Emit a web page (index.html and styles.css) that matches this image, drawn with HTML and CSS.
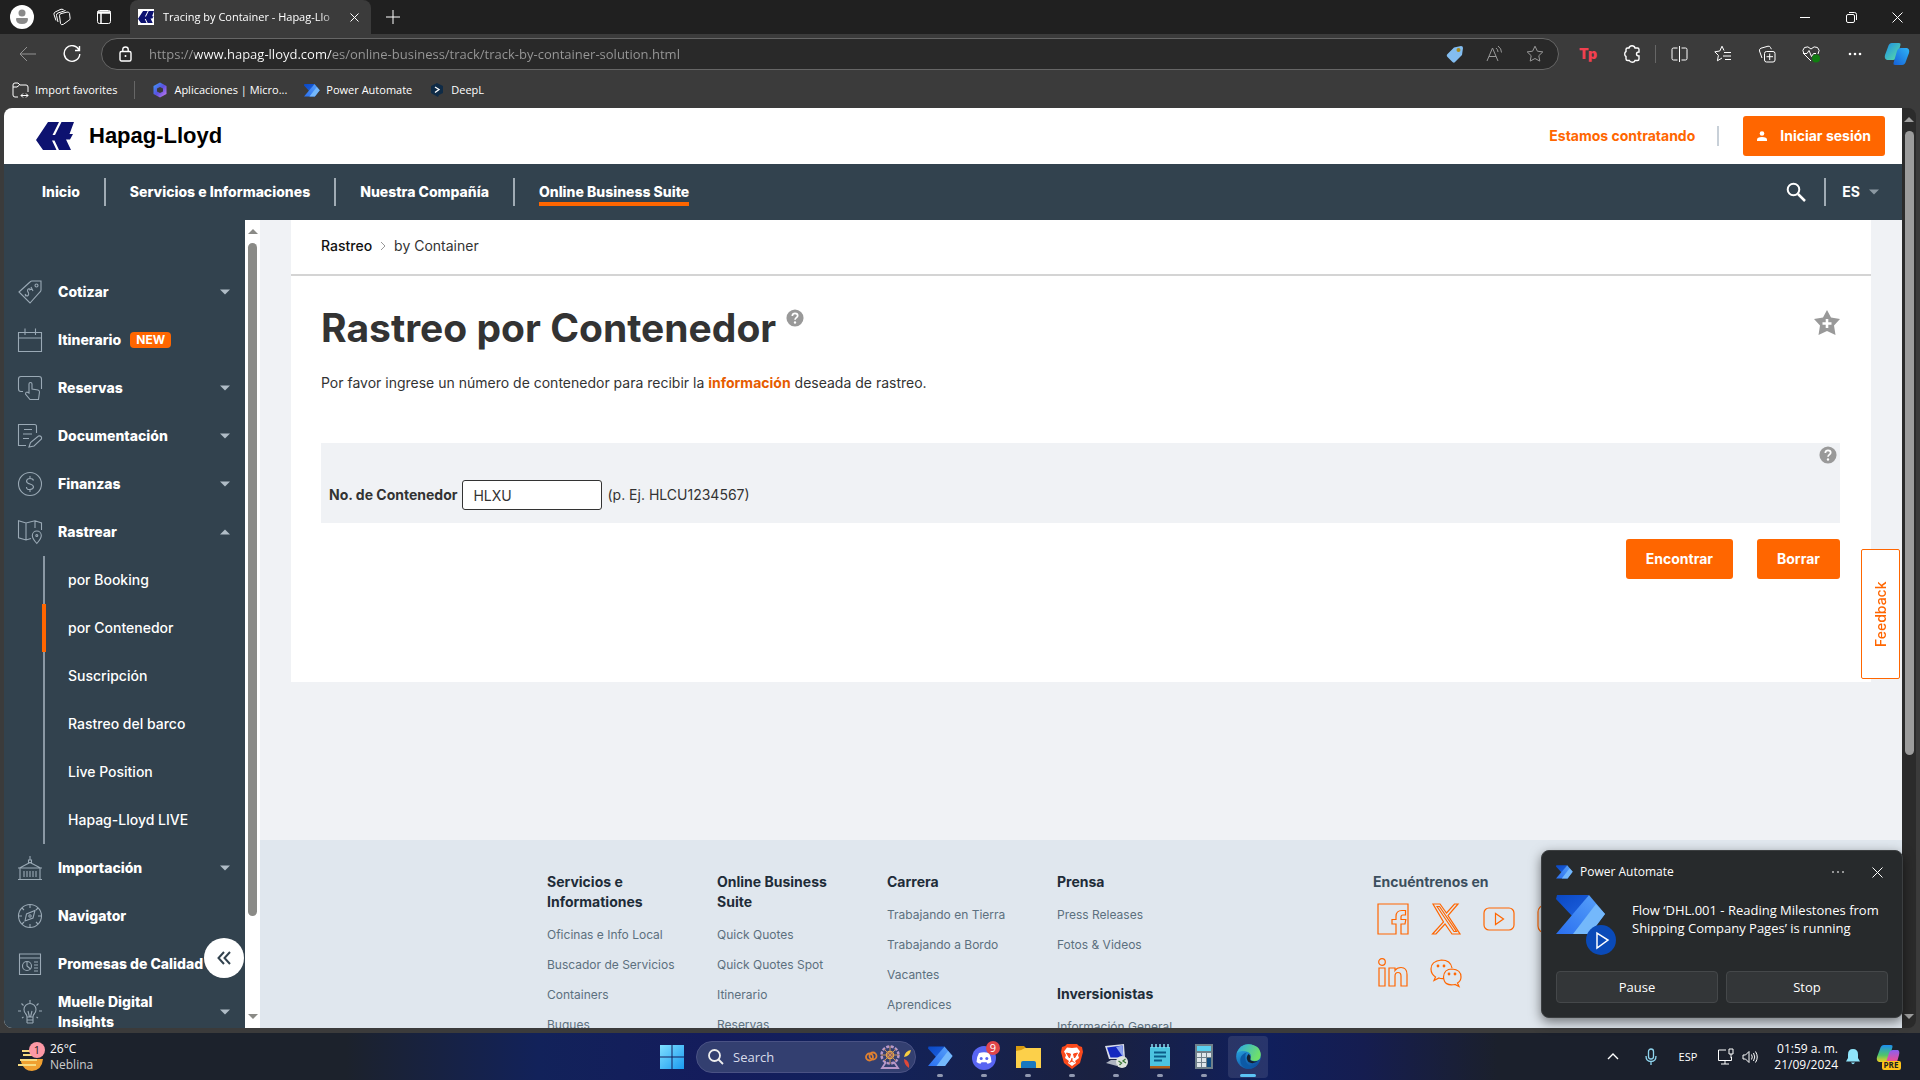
FILE: index.html
```
<!DOCTYPE html>
<html lang="es">
<head>
<meta charset="utf-8">
<title>Tracing by Container - Hapag-Lloyd</title>
<link rel="stylesheet" href="styles.css">
</head>
<body>
<svg class="defs" aria-hidden="true">
  <defs>
    <linearGradient id="pa1" x1="0" y1="0" x2="1" y2="1"><stop offset="0" stop-color="#0a48c4"/><stop offset="1" stop-color="#1e62e0"/></linearGradient>
    <linearGradient id="pa2" x1="0" y1="1" x2="1" y2="0"><stop offset="0" stop-color="#2a6ff0"/><stop offset="1" stop-color="#5aa4fa"/></linearGradient>
    <linearGradient id="cp1" x1="0" y1="0" x2="1" y2="1"><stop offset="0" stop-color="#1b8fe8"/><stop offset="1" stop-color="#5fe0a0"/></linearGradient>
    <linearGradient id="cp2" x1="1" y1="0" x2="0" y2="1"><stop offset="0" stop-color="#2fb4f5"/><stop offset="1" stop-color="#1560d8"/></linearGradient>
    <linearGradient id="cp3" x1="0" y1="0" x2="0" y2="1"><stop offset="0" stop-color="#1c8df0"/><stop offset="0.6" stop-color="#4fc56a"/><stop offset="1" stop-color="#f0d020"/></linearGradient>
    <linearGradient id="cp4" x1="0" y1="0" x2="0" y2="1"><stop offset="0" stop-color="#8a60f0"/><stop offset="0.6" stop-color="#e050a0"/><stop offset="1" stop-color="#f08040"/></linearGradient>
    <linearGradient id="win" x1="0" y1="0" x2="1" y2="1"><stop offset="0" stop-color="#7fe0ff"/><stop offset="1" stop-color="#1a9af0"/></linearGradient>
    <linearGradient id="ed1" x1="0" y1="0" x2="1" y2="0.4"><stop offset="0" stop-color="#2aa8e8"/><stop offset="1" stop-color="#6fe06a"/></linearGradient>
    <linearGradient id="ed2" x1="0" y1="0" x2="0.6" y2="1"><stop offset="0" stop-color="#2bb4ee"/><stop offset="1" stop-color="#0f4fa0"/></linearGradient>
    <linearGradient id="m3" x1="0" y1="0" x2="1" y2="1"><stop offset="0" stop-color="#3aa0f8"/><stop offset="0.5" stop-color="#5a50e0"/><stop offset="1" stop-color="#d080f0"/></linearGradient>
    <symbol id="flow" viewBox="0 0 50 40"><path d="M1 0h32L17 22 0 4z" fill="url(#pa1)"/><path d="M33 0l16 19-15 20H0z" fill="url(#pa2)"/><path d="M49 19 34 39H17L40 9z" fill="#74b8fb"/></symbol>
    <symbol id="hl" viewBox="0 0 38 28"><path d="M12 0h11l-6.500 13h2.500L25.500 0H38l-4.500 12h3.500l-3 5.500h-4L35 28H23l-4.500-9.500H16L20.500 28H7L0 18z" fill="#0d1270"/></symbol>
    <symbol id="help" viewBox="0 0 20 20"><circle cx="10" cy="10" r="9.500" fill="#999"/><path d="M7 7.800C7 5.800 8.300 4.800 10 4.800s3 1 3 2.700c0 2-3 2.300-3 4.500" fill="none" stroke="#fff" stroke-width="1.900"/><circle cx="10" cy="15" r="1.300" fill="#fff"/></symbol>
    <symbol id="caret" viewBox="0 0 10 6"><path d="M0 .5h10L5 5.500z" fill="currentColor"/></symbol>
  </defs>
</svg>

<header class="tabs">
  <button class="ib avatar" aria-label="Perfil"><svg width="24" height="24" viewBox="0 0 24 24"><circle cx="12" cy="12" r="12" fill="#fff"/><circle cx="12" cy="8" r="3.500" fill="#8a8a8a"/><path d="M6 14q0-1 1-1h10q1 0 1 1 0 5-6 5t-6-5z" fill="#8a8a8a"/></svg></button>
  <button class="ib" aria-label="Espacios de trabajo"><svg width="18" height="18" viewBox="0 0 18 18" class="ln"><path d="M6.500 7.500Q6.500 6 8 5.600l6-1.500q2-.4 2.500 1.200l.6 5q.2 1.500-1.200 2l-5.500 4Q8 17.500 7.500 15.500zM5 14 3.500 7.500Q3.300 5.500 5 5l7.500-2.500M3 12.500 1 6.500Q.6 4.800 2.200 4L8 1.200l2.500.3"/></svg></button>
  <button class="ib" aria-label="Acciones de pestañas"><svg width="16" height="16" viewBox="0 0 16 16" class="ln"><rect x="1.500" y="1.500" width="13" height="13" rx="2"/><path d="M1.500 3.500h13" stroke-width="2.500"/><path d="M5 4v10" stroke-width="1.500"/></svg></button>
  <div class="tab">
    <span class="fav"><svg width="16" height="12"><use href="#hl"/></svg></span>
    <span class="tabname">Tracing by Container - Hapag-Llo</span>
    <button class="ib" aria-label="Cerrar pestaña"><svg width="9" height="9" viewBox="0 0 9 9" class="ln"><path d="M.5.5l8 8m0-8-8 8"/></svg></button>
  </div>
  <button class="ib plus" aria-label="Nueva pestaña"><svg width="14" height="14" viewBox="0 0 14 14" class="ln"><path d="M7 0v14M0 7h14"/></svg></button>
  <div class="winbtns">
    <button class="ib" aria-label="Minimizar"><svg width="10" height="10" viewBox="0 0 10 10" class="ln"><path d="M0 5.500h10"/></svg></button>
    <button class="ib" aria-label="Restaurar"><svg width="11" height="11" viewBox="0 0 11 11" class="ln"><rect x=".5" y="2.500" width="8" height="8" rx="1.500"/><path d="M3 .5h5.500q2 0 2 2V8"/></svg></button>
    <button class="ib" aria-label="Cerrar"><svg width="11" height="11" viewBox="0 0 11 11" class="ln"><path d="M.5.500l10 10m0-10-10 10"/></svg></button>
  </div>
</header>

<div class="toolbar">
  <button class="ib dim" aria-label="Atrás"><svg width="18" height="16" viewBox="0 0 18 16" class="ln"><path d="M17 8H1m7-7L1 8l7 7"/></svg></button>
  <button class="ib" aria-label="Actualizar"><svg width="18" height="18" viewBox="0 0 18 18" class="ln thick"><path d="M16 5A7.800 7.800 0 1 0 16.800 9M16.500 1v4.500H12"/></svg></button>
  <div class="url">
    <svg width="13" height="16" viewBox="0 0 13 16" class="ln thick"><rect x="1" y="5.500" width="11" height="9.500" rx="1.500"/><path d="M3.800 5V3.500q0-2.500 2.700-2.500t2.700 2.500V5"/><circle cx="6.500" cy="10" r="1" fill="#fff" stroke="none"/></svg>
    <input class="address" aria-label="Dirección" value="https://www.hapag-lloyd.com/es/online-business/track/track-by-container-solution.html">
    <svg width="18" height="18" viewBox="0 0 18 18"><path d="M8 2.500 15 1q2 0 2 2l-1 7-7 7q-1 1.500-2.500 0L1.500 12q-1.500-1.500 0-3z" fill="#83bdf0"/><circle cx="12.500" cy="5" r="2" fill="#a88a1c"/></svg>
    <svg width="18" height="18" viewBox="0 0 18 18" class="ln grey"><path d="M1 16 6.500 3 12 16M3 11.500h7M10 3q2 1.500 2 4M12 1q3.500 2.500 3.500 6.500"/></svg>
    <svg width="18" height="18" viewBox="0 0 18 18" class="ln grey"><path d="M9 1.200l2.400 5 5.400.7-4 3.800 1 5.400L9 13.500l-4.800 2.600 1-5.400-4-3.800 5.400-.7z"/></svg>
  </div>
  <div class="tools">
    <button class="ib tp">Tp</button>
    <button class="ib" aria-label="Extensiones"><svg width="17" height="18" viewBox="0 0 17 18" class="ln thick"><path d="M5 3Q5.500.8 8 .8T11 3h2.500q1.500 0 1.500 1.500V7q-2.500 0-2.500 2t2.500 2v3q0 1.500-1.500 1.500H11q-.5 1.700-2.700 1.700T5.300 15.500H3.800Q2 15.500 2 14v-2.500Q.7 11 .7 9T2 6.500v-2Q2 3 3.500 3z"/></svg></button>
    <i class="vr"></i>
    <button class="ib" aria-label="Pantalla dividida"><svg width="17" height="18" viewBox="0 0 17 18" class="ln"><path d="M6.500 3h-4Q1 3 1 4.500v9Q1 15 2.500 15h4M10.500 3h4Q16 3 16 4.500v9q0 1.500-1.500 1.500h-4M8.500 1v16"/></svg></button>
    <button class="ib" aria-label="Favoritos"><svg width="18" height="18" viewBox="0 0 18 18" class="ln"><path d="M10 5.500 8 1.200 5.800 6 .8 6.800l3.600 3.600-1 5.400L8 13M10 7.500h7M9 11h8M11 14.500h6"/></svg></button>
    <button class="ib" aria-label="Colecciones"><svg width="18" height="18" viewBox="0 0 18 18" class="ln"><rect x="6.500" y="6.500" width="10.500" height="10.500" rx="2"/><path d="M11.700 8.500v6.500M8.500 11.700H15M4 13 1.500 6Q1 4 3 3.200l7-2q2-.4 2.600 1.500l.8 1.500"/></svg></button>
    <button class="ib" aria-label="Rendimiento"><svg width="18" height="18" viewBox="0 0 18 18" class="ln"><path d="M9 16 2 9Q-.5 5 2.500 2.500 6 .5 9 4q3-3.500 6.500-1.500Q18.500 5 16 9M1 8.500h4l2-3 2.500 6 2-3H14"/><circle cx="14" cy="13.500" r="4" fill="#107c10" stroke="none"/></svg></button>
    <button class="ib" aria-label="Más"><svg width="14" height="4" viewBox="0 0 14 4" fill="#fff"><circle cx="2" cy="2" r="1.300"/><circle cx="7" cy="2" r="1.300"/><circle cx="12" cy="2" r="1.300"/></svg></button>
    <button class="ib" aria-label="Copilot"><svg width="26" height="24" viewBox="0 0 26 24"><path d="M8 1h7q2 0 1.500 2L13 15q-1 3-4 3H3q-3-1-2-5L4 5q1-4 4-4z" fill="url(#cp1)"/><path d="M18 23h-7q-2 0-1.500-2L13 9q1-3 4-3h6q3 1 2 5l-3 8q-1 4-4 4z" fill="url(#cp2)"/></svg></button>
  </div>
</div>

<nav class="bookmarks" aria-label="Favoritos">
  <a href="#"><svg width="17" height="17" viewBox="0 0 17 17" class="ln"><path d="M6 15H3q-2 0-2-2V3q0-2 2-2h3l2 2h6q2 0 2 2v5M1 5h4l2.500-2M9 13.500h7m-2-2 2 2-2 2m-3-4-2 2 2 2"/></svg>Import favorites</a>
  <i class="vr"></i>
  <a href="#"><svg width="16" height="16" viewBox="0 0 16 16"><path d="M8 .5 14.500 4v8L8 15.500 1.500 12V4z" fill="url(#m3)"/><path d="M8 5l3 1.500v3L8 11 5 9.500v-3z" fill="#3b3b3b"/></svg>Aplicaciones | Micro...</a>
  <a href="#"><svg width="16" height="13"><use href="#flow"/></svg>Power Automate</a>
  <a href="#"><svg width="16" height="16" viewBox="0 0 16 16"><path d="M8 1l6 3v7l-4 2-1 2-7-4V4z" fill="#0f2b46"/><path d="M6 5l4 2.500L6 10.500" fill="none" stroke="#fff" stroke-width="1.300"/></svg>DeepL</a>
</nav>

<main class="view">
  <div class="site">
    <div class="brandbar">
      <a class="logo" href="#"><svg width="38" height="28"><use href="#hl"/></svg>Hapag-Lloyd</a>
      <a class="hire" href="#">Estamos contratando</a>
      <button class="btn login"><svg width="10" height="10" viewBox="0 0 10 10" fill="#fff"><circle cx="5" cy="2.500" r="2.300"/><path d="M0 10V8.500Q0 6 5 6t5 2.500V10z"/></svg>Iniciar sesión</button>
    </div>
    <nav class="mainnav">
      <a href="#">Inicio</a><a href="#">Servicios e Informaciones</a><a href="#">Nuestra Compañía</a><a href="#" class="on"><span>Online Business Suite</span></a>
      <button class="ib search" aria-label="Buscar"><svg width="20" height="20" viewBox="0 0 20 20" fill="none" stroke="#fff" stroke-width="2"><circle cx="7.500" cy="7.500" r="5.800"/><path d="M12 12l7 7" stroke-width="2.500"/></svg></button>
      <button class="ib lang">ES<svg width="10" height="6"><use href="#caret"/></svg></button>
    </nav>
    <div class="body">
      <aside class="side">
        <ul>
          <li><a href="#"><svg class="ic" viewBox="0 0 24 24"><path d="M1 12 12 2q1-1 2-1h9v9q0 1-1 2L12 23zM7 14q1.500 3 3 1.500T9.500 11q0-3 3-2M7 16l1.500-1M11 10l3.500-1M13 7l2 4"/><circle cx="18.500" cy="5.500" r="1.500"/></svg><b>Cotizar</b><svg class="ca"><use href="#caret"/></svg></a></li>
          <li><a href="#"><svg class="ic" viewBox="0 0 24 24"><path d="M.5 4.500h23v19H.5zM.5 10h23M7 .5V7M17.500.5V7"/></svg><b>Itinerario</b><em>NEW</em></a></li>
          <li><a href="#"><svg class="ic" viewBox="0 0 24 24"><path d="M5 15.500H3q-2.500 0-2.500-2.500V3Q.5.500 3 .500h18q2.500 0 2.500 2.500v10M11 16V8q0-1.500 1.500-1.500T14 8v5l6 1q1.500.5 1.500 2L20.500 23.500H12L7.500 18q0-2 1.500-2l2 1z"/></svg><b>Reservas</b><svg class="ca"><use href="#caret"/></svg></a></li>
          <li><a href="#"><svg class="ic" viewBox="0 0 24 24"><path d="M8 21.500H.5V.5h16q2 0 2 2V9M6 5.500h8M5 10h9M5 14.500h6M11 23l1.500-4.500 8-6.500q1.500-.5 2.500.5t.5 2.500L16 22z"/></svg><b>Documentación</b><svg class="ca"><use href="#caret"/></svg></a></li>
          <li><a href="#"><svg class="ic" viewBox="0 0 24 24"><circle cx="12" cy="12" r="11.500"/><path d="M15.500 8.500Q15 6.500 12 6.500T8.500 9q0 2 3.500 3t3.500 3-3.500 2.500T8.500 15M12 4v2.500m0 11V20"/></svg><b>Finanzas</b><svg class="ca"><use href="#caret"/></svg></a></li>
          <li><a href="#"><svg class="ic" viewBox="0 0 24 24"><path d="M23.500 10V3L17 .8 8 3 .5.800v17L8 20l5-1.500M8 3v17M17 .8V8M18.800 23.500q-4.500-5-4.500-8a4.500 4.500 0 0 1 9 0q0 3-4.500 8z"/><circle cx="18.800" cy="15.500" r="1"/></svg><b>Rastrear</b><svg class="ca up"><use href="#caret"/></svg></a>
            <ul class="sub">
              <li><a href="#">por Booking</a></li><li class="cur"><a href="#">por Contenedor</a></li><li><a href="#">Suscripción</a></li><li><a href="#">Rastreo del barco</a></li><li><a href="#">Live Position</a></li><li><a href="#">Hapag-Lloyd LIVE</a></li>
            </ul></li>
          <li><a href="#"><svg class="ic" viewBox="0 0 24 24"><path d="M12 0v4m-1.500 0h3v2.500h-3zM12 6.500 1.500 12m10.500-5.500L22.500 12M0 12h24M2 12v11M22 12v11M0 23.500h24M6 15v6m3-6v6m3-6v6m3-6v6m3-6v6"/></svg><b>Importación</b><svg class="ca"><use href="#caret"/></svg></a></li>
          <li><a href="#"><svg class="ic" viewBox="0 0 24 24"><circle cx="12" cy="12" r="11.500"/><path d="M12 0v4m0 16v4M0 12h4m16 0h4M4 4l2 2M20 4l-2 2M4 20l2-2M20 20l-2-2M7 17l1.500-7L17 6.500 15 14z"/><circle cx="12" cy="12" r="1.200"/></svg><b>Navigator</b></a></li>
          <li><a href="#"><svg class="ic" viewBox="0 0 24 24"><path d="M1.500 2h21v20.500h-21zM1.500 6h21M16 10h4m-4 3h4m-4 3h4M16 19h4M9 9.500V14l3.500 3"/><circle cx="9" cy="14" r="4.500"/></svg><b>Promesas de Calidad</b></a></li>
          <li><a href="#"><svg class="ic" viewBox="0 0 24 24"><path d="M9 17q0-2-1.500-3.500a6 6 0 1 1 9 0Q15 15 15 17zM9 20h6m-6 3h6M9 17v6m6-6v6M10 11l1.500 6m2.500-6-1.500 6M12 0v3M3.500 3.500l2 2m15-2-2 2M0 11h3m18 0h3M4 18l1.500-1M20 18l-1.500-1"/></svg><b>Muelle Digital Insights</b><svg class="ca"><use href="#caret"/></svg></a></li>
        </ul>
        <button class="collapse" aria-label="Contraer menú"><svg width="14" height="14" viewBox="0 0 14 14" fill="none" stroke="#32424e" stroke-width="2"><path d="M7 1 1.500 7 7 13M13 1 7.500 7l5.500 6"/></svg></button>
      </aside>
      <div class="sb light"><svg class="up"><use href="#caret"/></svg><i></i><s></s><svg><use href="#caret"/></svg></div>
      <div class="content">
        <section class="card">
          <div class="crumbs"><a href="#">Rastreo</a><svg width="6" height="10" viewBox="0 0 6 10" fill="none" stroke="#999"><path d="M1 1l4 4-4 4"/></svg><span>by Container</span></div>
          <div class="panel">
            <div class="head"><h1>Rastreo por Contenedor</h1><svg class="hp" width="18" height="18"><use href="#help"/></svg><svg class="star" width="26" height="26" viewBox="0 0 26 26"><path d="M13 0l4 7.500 9 1.500-6 6.500 1.500 9.500-8.500-4-8.500 4L6 15.500 0 9l9-1.500z" fill="#999"/><path d="M13 9v9M8.500 13.500h9" stroke="#fff" stroke-width="2.600"/></svg></div>
            <p>Por favor ingrese un número de contenedor para recibir la <a href="#">información</a> deseada de rastreo.</p>
            <form>
              <div class="box"><svg class="hp" width="18" height="18"><use href="#help"/></svg>
                <div class="row"><label for="cn">No. de Contenedor</label><input id="cn" value="HLXU"><span>(p. Ej. HLCU1234567)</span></div></div>
              <div class="acts"><button type="button" class="btn">Encontrar</button><button type="button" class="btn">Borrar</button></div>
            </form>
          </div>
        </section>
        <footer><div class="cols">
          <div><h2>Servicios e Informationes</h2><a href="#">Oficinas e Info Local</a><a href="#">Buscador de Servicios</a><a href="#">Containers</a><a href="#">Buques</a></div>
          <div><h2>Online Business Suite</h2><a href="#">Quick Quotes</a><a href="#">Quick Quotes Spot</a><a href="#">Itinerario</a><a href="#">Reservas</a></div>
          <div><h2>Carrera</h2><a href="#">Trabajando en Tierra</a><a href="#">Trabajando a Bordo</a><a href="#">Vacantes</a><a href="#">Aprendices</a></div>
          <div><h2>Prensa</h2><a href="#">Press Releases</a><a href="#">Fotos &amp; Videos</a><h2 class="more">Inversionistas</h2><a href="#">Información General</a></div>
          <div class="social"><h2>Encuéntrenos en</h2><div class="icons">
            <svg viewBox="0 0 32 32"><path d="M1 1h30v30h-7V21h4l.8-4.500H24V14q0-2 2-2h2.500V7.500H25q-6 0-6 6v3h-4V21h4v10H1z"/></svg>
            <svg viewBox="0 0 32 32"><path d="M3 1h7l6.500 9 8-9h3.500L18 12.500 30 31h-8l-7-10-9 10H2.500L13.500 19zM7 3.500l17 25h2.500L9.500 3.500z"/></svg>
            <svg viewBox="0 0 32 32"><rect x="1" y="5" width="30" height="22" rx="5"/><path d="M12.500 10.500v11l8-5.500z"/></svg>
            <svg viewBox="0 0 32 32"><rect x="2" y="2" width="28" height="28" rx="7"/><circle cx="16" cy="16" r="7"/></svg>
            <svg viewBox="0 0 32 32"><circle cx="5" cy="5" r="3.300"/><path d="M2 11h6v18H2zM12 11h6v2.500q2-3 6-3 6 0 6 7V29h-6V19q0-3.500-3-3.500T18 19v10h-6z"/></svg>
            <svg viewBox="0 0 32 32"><path d="M22 11q-1.500-8-10.500-8Q1 4 1 12q0 5 4.500 8L4 23.500 9 21q2 .8 5 .5"/><path d="M22 12q9 .5 9 8 0 4-3.500 6l1.500 3.500-4-2Q14 29.500 13.500 20 14 12 22 12z"/><g fill="#f60"><circle cx="8" cy="9" r=".8"/><circle cx="14" cy="9" r=".8"/><circle cx="19" cy="17" r=".8"/><circle cx="25" cy="17" r=".8"/></g></svg>
          </div></div>
        </div></footer>
      </div>
    </div>
    <button class="feedback">Feedback</button>
  </div>
  <div class="sb dark"><svg class="up"><use href="#caret"/></svg><i></i><s></s><svg><use href="#caret"/></svg></div>
  <section class="toast">
    <div class="th"><svg width="17" height="14"><use href="#flow"/></svg><span>Power Automate</span><button class="ib" aria-label="Opciones"><svg width="14" height="4" viewBox="0 0 14 4" fill="#bbb"><circle cx="2" cy="2" r="1"/><circle cx="7" cy="2" r="1"/><circle cx="12" cy="2" r="1"/></svg></button><button class="ib" aria-label="Cerrar aviso"><svg width="11" height="11" viewBox="0 0 11 11" class="ln"><path d="M.5.500l10 10m0-10-10 10"/></svg></button></div>
    <div class="tb"><svg width="60" height="60" viewBox="0 0 60 60"><use href="#flow" width="50" height="40"/><circle cx="45" cy="45" r="15" fill="#0a4ab8"/><path d="M41 38v15l11-8z" fill="none" stroke="#fff" stroke-width="1.500"/></svg><p>Flow ‘DHL.001 - Reading Milestones from<br>Shipping Company Pages’ is running</p></div>
    <div class="ta"><button>Pause</button><button>Stop</button></div>
  </section>
</main>

<footer class="taskbar">
  <div class="weather"><svg width="30" height="32" viewBox="0 0 30 32"><path d="M4 18h22q-1 11-11 12-8 0-11-9z" fill="#f0a030"/><path d="M6 14h14M3 19h17M1 24h18M5 10h8" stroke="#f8dc80" stroke-width="2"/><circle cx="20" cy="9" r="8" fill="#fd99a6"/><text x="20" y="13" text-anchor="middle" font-size="11" fill="#222">1</text></svg><div>26°C<br><span>Neblina</span></div></div>
  <div class="apps">
    <button aria-label="Inicio"><svg width="24" height="24" viewBox="0 0 24 24" fill="url(#win)"><path d="M0 0h11.500v11.500H0zM12.500 0H24v11.500H12.500zM0 12.500h11.500V24H0zM12.500 12.500H24V24H12.500z"/></svg></button>
    <label class="tsearch"><svg width="16" height="16" viewBox="0 0 16 16" fill="none" stroke="#eee" stroke-width="1.800"><circle cx="6.500" cy="6.500" r="5.500"/><path d="M10.500 10.500 15 15"/></svg><input placeholder="Search" aria-label="Search"><svg width="48" height="26" viewBox="0 0 48 26" fill="none"><circle cx="5.500" cy="13" r="3.500" stroke="#e08030" stroke-width="1.800"/><circle cx="9" cy="12" r="3.500" stroke="#e08030" stroke-width="1.800"/><circle cx="26" cy="11" r="8.500" stroke="#b898c8" stroke-width="2.500" stroke-dasharray="3 1.500"/><circle cx="26" cy="11" r="3.500" fill="#5a3060" stroke="#f0b040" stroke-width="1.500"/><path d="M26 2v18M17 11h18M20 5l12 12M32 5 20 17" stroke="#c89060"/><path d="M22 18l-4 6h16l-4-6" stroke="#b898c8" stroke-width="1.800"/><path d="M40 13q1-6 7-7-1 6-7 7z" fill="#f8d040"/><path d="M40 15q6 2 5 9-5-3-5-9z" fill="#e04838"/></svg></label>
    <button class="run" aria-label="Power Automate"><svg width="25" height="21"><use href="#flow"/></svg></button>
    <button class="run" aria-label="Discord"><svg width="32" height="32" viewBox="0 0 32 32"><circle cx="16" cy="17" r="12" fill="#5865f2"/><path d="M11 12q5-1.500 10 0 2.500 4 2.500 9-2 1.500-4 1.800l-1-1.500h-5l-1 1.500q-2-.3-4-1.800 0-5 2.500-9z" fill="#fff"/><circle cx="13.200" cy="17.500" r="1.500" fill="#5865f2"/><circle cx="18.800" cy="17.500" r="1.500" fill="#5865f2"/><circle cx="25" cy="7" r="7" fill="#e0454a"/><text x="25" y="11" text-anchor="middle" font-size="11" fill="#fff">9</text></svg></button>
    <button class="run" aria-label="Explorador"><svg width="25" height="24" viewBox="0 0 25 24"><path d="M0 1h8l3 3-3 3H0z" fill="#d89a10"/><path d="M0 6q5 0 9-3h16v20H0z" fill="#fcd04a"/><path d="M5 23v-5q0-2 2-2h11q2 0 2 2v5z" fill="#1878c0"/></svg></button>
    <button class="run" aria-label="Brave"><svg width="22" height="25" viewBox="0 0 22 25"><path d="M6 0h10l2 2 3 1 1 5-3 11-8 6-8-6L0 8l1-5 3-1z" fill="#fb4a1c"/><path d="M11 4l5-.5 3 4-2 3.500 1 3-4 3 1 2-4 3-4-3 1-2-4-3 1-3-2-3.500 3-4z" fill="#fff"/><path d="M5.500 9l4 1-1 4zM16.500 9l-4 1 1 4zM11 14v3l-2.500 1.500M11 17l2.500 1.500" stroke="#fb4a1c" fill="#fb4a1c"/></svg></button>
    <button class="run" aria-label="Escritorio remoto"><svg width="25" height="25" viewBox="0 0 25 25"><path d="M1 2l19-2 1 15H5z" fill="#d8dce8"/><path d="M3 3.500l15.500-2 .8 12H6.500z" fill="#1428c0"/><path d="M12 3l6.500-1.500.8 12z" fill="#8aa0f0"/><path d="M2 19l5-3h9l-3 6z" fill="#aeb4c0"/><circle cx="18" cy="18" r="6" fill="#dfe4dc"/><path d="M14.500 17l3 2-2 2m6-6-2.500 2 3 2" stroke="#3c7838" fill="none" stroke-width="1.300"/></svg></button>
    <button class="run" aria-label="Bloc de notas"><svg width="20" height="25" viewBox="0 0 20 25"><path d="M0 3h20v21H0z" fill="#4cc4e0"/><path d="M2 0v4m4-4v4m4-4v4m4-4v4m4-4v4" stroke="#8adcf0" stroke-width="1.500"/><path d="M4 8.500h12m-12 4h12m-12 4h8" stroke="#0b5c88" stroke-width="1.800"/><path d="M0 22h20v2.500H0z" fill="#b0601c"/></svg></button>
    <button class="run" aria-label="Calculadora"><svg width="18" height="25" viewBox="0 0 18 25"><path d="M0 0h18v25H0z" fill="#70808a"/><path d="M2 2h14v5H2z" fill="#5ad0f0"/><path d="M2 9h4v4H2zm5 0h4v4H7zm5 0h4v4h-4zM2 14h4v4H2zm5 0h4v4H7zM2 19h4v4H2zm5 0h4v4H7z" fill="#dfe6ea"/><path d="M12 14h4v9h-4z" fill="#0c4a80"/></svg></button>
    <button class="run act" aria-label="Edge"><svg width="25" height="25" viewBox="0 0 25 25"><circle cx="12.500" cy="12.500" r="12.300" fill="url(#ed2)"/><path d="M1 9Q4 .3 12.500.2 24.500 1 24.800 11q-.3 6-6.300 6-5 0-4-3 1.500-4-2.500-6Q5 5.500 1 9z" fill="url(#ed1)"/><path d="M9.500 12q-1 8 6 10.500 4 .3 7.300-3.500Q18 26 10 24.500 3 21 4.500 14 6 9.500 11 8.500 9 10 9.500 12z" fill="#0c5aa6"/><path d="M14.500 14q-1.500 3 4 3.500 3 0 5-1.500-6 5-11 2-3.500-4 0-8 2.500 1.500 2 4z" fill="#14202f"/></svg></button>
  </div>
  <div class="tray">
    <svg width="12" height="7" viewBox="0 0 12 7" class="ln thick"><path d="M1 6l5-5 5 5"/></svg>
    <svg width="12" height="18" viewBox="0 0 12 18" fill="none" stroke="#8fd4ee" stroke-width="1.300"><rect x="3.500" y="1" width="5" height="10" rx="2.500"/><path d="M1 8q0 5.500 5 5.500T11 8M6 13.500V17"/></svg>
    <span>ESP</span>
    <svg width="17" height="17" viewBox="0 0 17 17" class="ln"><path d="M9 2H1.500v10.500h13V9M8 12.500V16M4 16h8M12 1h4v5h-4zM14 6v4"/></svg>
    <svg width="16" height="14" viewBox="0 0 16 14" class="ln"><path d="M1 5v4h2.500L7 12.500v-11L3.500 5zM9.500 4.500q1.500 2.500 0 5M11.500 3q2.500 4 0 8M13.500 1.500q3.500 5.500 0 11"/></svg>
    <time>01:59 a. m.<br>21/09/2024</time>
    <svg width="14" height="16" viewBox="0 0 14 16" fill="#8fe4fa"><path d="M7 0q5 0 5 5.500V9l2 3.500H0L2 9V5.500Q2 0 7 0zM5 13.500h4q-2 3.500-4 0z"/></svg>
    <svg class="pre" width="26" height="26" viewBox="0 0 26 26"><path d="M8 1h7q2 0 1.500 2L13 15q-1 3-4 3H3q-3-1-2-5L4 5q1-4 4-4z" fill="url(#cp3)"/><path d="M17 22h-6q-2 0-1.500-2L13 9q1-3 4-3h5q2 1 1 5l-2 7q-1 4-4 4z" fill="url(#cp4)"/><rect x="6" y="17" width="19" height="9" rx="2" fill="#ffc21a"/><text x="15" y="24" text-anchor="middle" font-size="8" font-weight="700" fill="#222">PRE</text></svg>
  </div>
</footer>
</body>
</html>
```
FILE: styles.css
```
* { box-sizing: border-box; }
body { margin: 0; height: 100vh; display: flex; flex-direction: column; overflow: hidden; background: #3b3b3b; color: #fff; font: 12px/16px "Open Sans", "Noto Sans", sans-serif; }
a { color: inherit; text-decoration: none; }
button, input { font: inherit; color: inherit; }
button { cursor: pointer; }
svg { flex: none; display: block; }
ul { list-style: none; margin: 0; padding: 0; }
.defs { position: absolute; width: 0; height: 0; }
.ln { fill: none; stroke: #fff; stroke-width: 1; }
.thick { stroke-width: 1.4; }
.grey { stroke: #999; }
.ib { background: none; border: 0; padding: 0; display: flex; align-items: center; justify-content: center; flex: none; }
.vr { width: 1px; height: 18px; background: #666; }

.tabs { height: 34px; flex: none; background: #202020; display: flex; align-items: center; padding-left: 10px; gap: 2px; }
.tabs > .ib { width: 40px; height: 34px; }
.tabs > .avatar { width: 24px; margin-right: 6px; }
.tab { width: 241px; height: 34px; margin-left: 4px; padding: 0 12px 0 8px; background: #3b3b3b; border-radius: 8px 8px 0 0; display: flex; align-items: center; gap: 9px; font-size: 11px; }
.fav { width: 16px; height: 16px; background: #fff; display: flex; align-items: center; }
.tabname { flex: 1; white-space: nowrap; mask-image: linear-gradient(90deg, #000 88%, transparent); }
.winbtns { margin-left: auto; display: flex; }
.winbtns .ib { width: 46px; height: 34px; }

.toolbar { flex: none; height: 40px; display: flex; align-items: center; padding: 0 3px 0 18px; }
.toolbar > .ib { width: 20px; margin-right: 24px; }
.toolbar > .ib + .ib { margin-right: 19px; }
.dim { opacity: .45; }
.url { flex: 1; height: 32px; border: 1px solid #666; border-radius: 16px; background: #292929; display: flex; align-items: center; gap: 22px; padding: 0 14px 0 17px; }
.address { flex: 1; min-width: 0; margin-left: -5px; border: 0; outline: 0; padding: 0; font-size: 13px; color: transparent; background: linear-gradient(90deg, #999 46px, #fff 46px 183px, #999 183px); background-clip: text; }
.tools { display: flex; align-items: center; padding-left: 7px; }
.tools .ib { width: 44px; height: 30px; }
.tools .vr { margin: 0 1px; }
.tools .ib:last-child { width: 40px; }
.tools .tp { color: #f04050; font: 900 14px/20px Inter, sans-serif; }

.bookmarks { flex: none; height: 34px; display: flex; align-items: center; padding: 0 0 2px 12px; gap: 17px; font-size: 11px; }
.bookmarks a { display: flex; align-items: center; gap: 6px; }

.view { position: relative; flex: 1; min-height: 0; display: flex; margin: 0 4px 5px; font-family: Inter, sans-serif; }
.site { position: relative; flex: 1; min-width: 0; display: flex; flex-direction: column; overflow: hidden; border-radius: 8px 0 0 8px; background: #fff; }
.brandbar { flex: none; height: 56px; display: flex; align-items: center; padding: 0 17px 0 32px; }
.logo { display: flex; align-items: center; gap: 15px; color: #000; font: 700 22px/28px "Liberation Sans", Arial, sans-serif; }
.hire { margin-left: auto; padding-right: 22px; margin-right: 24px; border-right: 2px solid #c8d0d8; color: #f60; font-size: 14px; line-height: 20px; font-weight: 700; }
.btn { height: 40px; border: 0; border-radius: 3px; background: #f60; color: #fff; font-size: 14px; font-weight: 700; padding: 0 20px; }
.login { display: flex; align-items: center; gap: 13px; padding: 0 14px; }
.mainnav { flex: none; height: 56px; background: #32424e; display: flex; align-items: center; padding-left: 38px; font-size: 14px; font-weight: 800; }
.mainnav > a { height: 28px; line-height: 28px; padding-right: 24px; margin-right: 24px; border-right: 2px solid #a0abb4; }
.mainnav .on { border: 0; }
.on span { display: block; margin-top: 4px; line-height: 20px; border-bottom: 4px solid #f60; }
.search { margin-left: auto; width: 56px; }
.lang { height: 28px; border-left: 2px solid #a0abb4; padding: 0 23px 0 16px; gap: 9px; font-weight: 700; }
.lang svg { color: #8b98a2; }

.body { flex: 1; min-height: 0; display: flex; }
.side { position: relative; width: 241px; flex: none; background: #32424e; padding-top: 48px; overflow: hidden; font-size: 14px; line-height: 20px; }
.side > ul > li > a { height: 48px; display: flex; align-items: center; padding: 0 15px 0 14px; }
.ic { width: 24px; height: 24px; margin-right: 16px; fill: none; stroke: #9aa9b5; stroke-width: 1.1; overflow: visible; }
.side b { font-weight: 800; white-space: nowrap; }
.side li:last-child > a b { white-space: normal; width: 110px; }
.side em { margin-left: 9px; background: #f60; border-radius: 4px; padding: 0 6px; font: 700 12px/16px Inter, sans-serif; }
.ca { width: 10px; height: 6px; margin-left: auto; color: #b0bcc6; }
.up { transform: scaleY(-1); }
.sub { margin-left: 39px; border-left: 2px solid #8b98a4; font-weight: 500; }
.sub a { display: block; height: 48px; line-height: 48px; padding-left: 23px; }
.sub .cur { margin-left: -3px; border-left: 4px solid #f60; }
.cur a { padding-left: 22px; }
.collapse { position: absolute; right: 1px; bottom: 50px; width: 40px; height: 40px; border: 0; border-radius: 50%; background: #fff; display: grid; place-items: center; padding: 0; }

.sb { flex: none; display: flex; flex-direction: column; align-items: center; padding: 8px 0; }
.sb svg { width: 10px; height: 7px; }
.sb i { width: 9px; margin-top: 8px; border-radius: 5px; }
.sb s { flex: 1; }
.light { width: 15px; background: #fff; color: #8a8a86; }
.light i { height: 85%; background: #8a8a86; }
.dark { width: 14px; background: #2b2b2b; color: #a0a0a0; border-radius: 0 8px 8px 0; }
.dark i { height: 69%; background: #9c9c9c; }

.content { flex: 1; min-width: 0; background: #f0f2f5; display: flex; flex-direction: column; color: #333; }
.card { flex: none; margin: 0 31px 158px; background: #fff; padding-bottom: 103px; }
.crumbs { height: 56px; padding: 0 30px 3px; display: flex; align-items: center; gap: 8px; border-bottom: 2px solid #d4d4d4; font-size: 14px; }
.crumbs a { color: #111; font-weight: 500; }
.panel { padding: 28px 31px 0 30px; }
.head { display: flex; align-items: flex-start; }
.head h1 { margin: 0; font-size: 39px; line-height: 48px; font-weight: 700; }
.hp { margin: 5px 0 0 10px; }
.star { margin: 6px 0 0 auto; }
.panel p { margin: 21px 0 50px; font-size: 14px; line-height: 20px; }
.panel p a { color: #e65c00; font-weight: 700; }
.box { height: 80px; background: #f0f2f5; padding-top: 3px; }
.box .hp { margin: 0 3px 0 auto; }
.row { display: flex; align-items: center; padding: 16px 0 0 8px; gap: 5px; font-size: 14px; }
.row label { font-weight: 700; }
.row input { width: 140px; height: 30px; border: 1px solid #333; border-radius: 3px; background: #fff; padding: 0 10px; }
.acts { display: flex; justify-content: flex-end; gap: 24px; margin-top: 16px; }

.content footer { flex: 1 0 300px; background: #e0e7ee; padding: 32px 36px 0; }
.cols { max-width: 1068px; margin: 0 auto; display: flex; }
.cols > div { width: 170px; }
.cols h2 { margin: 0 0 8px; padding-right: 40px; font-size: 14px; line-height: 20px; font-weight: 700; color: #1e2c38; }
.cols a { display: block; font-size: 12px; line-height: 30px; color: #5c707e; }
.cols .more { margin-top: 24px; }
.cols .social { width: 242px; margin-left: auto; }
.cols .social h2 { padding: 0; margin-bottom: 11px; color: #3c4f5e; }
.icons { display: flex; flex-wrap: wrap; gap: 22px 21px; padding-left: 4px; }
.icons svg { width: 32px; height: 32px; fill: none; stroke: #f60; stroke-width: 1.2; }
.feedback { position: absolute; right: 2px; top: 441px; width: 39px; height: 130px; background: #fff; border: 1px solid #f60; border-radius: 2px; color: #f60; font-size: 14px; font-weight: 500; writing-mode: vertical-rl; transform: rotate(180deg); }

.toast { position: absolute; right: 13px; bottom: 10px; width: 362px; height: 168px; background: #272a2c; border: 1px solid #3c3f41; border-radius: 8px; padding: 13px 14px 14px; display: flex; flex-direction: column; box-shadow: 0 4px 12px rgba(0, 0, 0, .5); font: 12px/16px "Open Sans", "Noto Sans", sans-serif; }
.th { display: flex; align-items: center; gap: 7px; margin-right: -6px; }
.th span { flex: 1; }
.th .ib { width: 33px; }
.tb { display: flex; margin-top: 15px; gap: 16px; height: 60px; }
.tb p { margin: 6px 0 0; font-size: 13px; line-height: 18px; white-space: nowrap; }
.ta { display: flex; gap: 8px; margin-top: auto; }
.ta button { flex: 1; height: 32px; background: #333638; border: 1px solid #45484a; border-radius: 4px; font-size: 13px; }

.taskbar { flex: none; height: 47px; display: grid; grid-template-columns: 1fr auto 1fr; align-items: center; background: linear-gradient(90deg, #1c222c 18%, #12225a 28%, #141c5c 37%, #12225c 45%, #1a2140 57%, #101f5c 66%, #151d50 71%, #1b202c 78%); }
.weather { display: flex; align-items: center; gap: 3px; padding-left: 17px; }
.weather span { color: #ccc; }
.apps { display: flex; align-items: center; }
.apps > button { position: relative; width: 44px; height: 42px; background: none; border: 0; padding: 0; display: grid; place-items: center; }
.run::after { content: ""; position: absolute; bottom: 1px; left: 19px; width: 6px; height: 3px; border-radius: 2px; background: #9098b0; }
.apps > .act { background: rgba(255, 255, 255, .1); border-radius: 4px; width: 40px; margin: 0 2px; }
.act::after { left: 12px; width: 16px; background: #5cc4f5; }
.tsearch { width: 220px; height: 32px; margin: 0 2px; border: 1px solid #4a5284; border-radius: 16px; background: #333f70; display: flex; align-items: center; padding: 0 3px 0 11px; gap: 9px; }
.tsearch input { flex: 1; min-width: 0; border: 0; outline: 0; background: none; padding: 0; font-size: 13px; }
.tsearch input::placeholder { color: #d8dcea; }
.tray { display: flex; align-items: center; justify-content: flex-end; padding-right: 18px; gap: 8px; }
.tray span { margin: 0 12px 0 14px; font-size: 11px; }
.tray > svg:first-child { margin-right: 18px; }
.tray time { margin-left: 8px; text-align: right; }
.pre { margin-left: 8px; }
```
